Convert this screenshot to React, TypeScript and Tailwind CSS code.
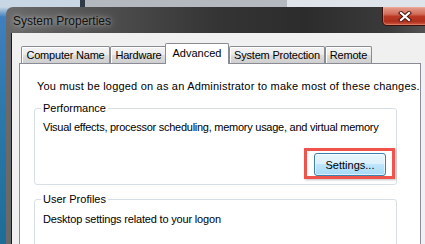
export default function App() {
  const tab =
    "h-[17px] flex items-center justify-center border border-b-0 border-[#898c95] shadow-[inset_1px_1px_0_#ffffff] bg-[linear-gradient(to_bottom,#f3f3f3,#ebebeb_50%,#dddddd_50%,#cfcfcf)] text-[11px] leading-[14px] text-black rounded-t-[2px] whitespace-nowrap tracking-[-0.2px]";
  return (
    <div className="w-[425px] h-[244px] overflow-hidden flex flex-col bg-[#1f6f9e] font-['Liberation_Sans',Arial,sans-serif]">
      <div className="h-[7px] flex shrink-0">
        <div className="w-[80px] bg-[#c9d6e3]" />
        <div className="w-[5px] bg-[#2f3a46]" />
        <div className="w-[202px] bg-[#b4b9bf]" />
        <div className="flex-1 bg-[#dfe4ea]" />
      </div>
      <div className="flex flex-1 min-h-0 bg-[linear-gradient(to_bottom,#c9d6e3_0px,#3f7fbf_10px,#2a77a8_50%,#1d6d98)]">
        <div className="w-[6px] shrink-0" />
        <div className="flex-1 flex flex-col rounded-tl-[7px] bg-[linear-gradient(to_right,#6a6a6a,#525252_20%,#343434_50%,#2c2c2c_70%,#3a3a3a_90%,#555555)]">
          <div className="h-[26px] shrink-0 flex justify-between items-start">
            <div className="mt-[6px] ml-[7px] text-[12px] leading-[16px] text-[#111] [text-shadow:0_0_10px_rgba(255,255,255,0.6),0_0_4px_rgba(255,255,255,0.45)]">
              System Properties
            </div>
            <div className="mr-[2px] w-[47px] h-[19px] flex items-center justify-center rounded-b-[5px] border border-t-0 border-[#3b0f08] bg-[linear-gradient(to_bottom,#e4a091_0%,#d26c58_40%,#bb3a25_52%,#b0301d_80%,#cf5b42_100%)] shadow-[inset_0_0_0_1px_rgba(255,190,170,0.35)]">
              <svg width="14" height="11" viewBox="0 0 14 11">
                <path d="M3 2 L11 9 M11 2 L3 9" stroke="#4a1a12" strokeWidth="4.2" strokeLinecap="square" />
                <path d="M3 2 L11 9 M11 2 L3 9" stroke="#ffffff" strokeWidth="2.2" strokeLinecap="square" />
              </svg>
            </div>
          </div>
          <div className="flex-1 min-h-0 ml-[5px] mr-[5px] border-l border-[#1a1a1a] bg-[#f0f0f0] pt-[10px] pl-[7px] pr-[5px] flex flex-col">
            <div className="relative z-10 h-[20px] flex items-end pl-[2px] shrink-0">
              <div className={`${tab} w-[89px]`}>Computer Name</div>
              <div className={`${tab} w-[57px]`}>Hardware</div>
              <div className="-ml-[2px] -mb-px w-[64px] h-[21px] flex items-center justify-center pb-[2px] bg-white border border-b-0 border-[#898c95] rounded-t-[2px] text-[11px] leading-[14px] text-black">
                Advanced
              </div>
              <div className={`${tab} w-[96px]`}>System Protection</div>
              <div className={`${tab} w-[47px]`}>Remote</div>
            </div>
            <div className="h-[300px] shrink-0 border border-[#898c95] bg-white pl-[14px] pt-[14px] text-[11px] text-black whitespace-nowrap">
              <div className="pl-[3px] leading-[16px] tracking-[0.2px]">
                You must be logged on as an Administrator to make most of these changes.
              </div>
              <div className="relative mt-[14px] w-[363px] border border-[#d5dfe5] rounded-[3px] pl-[8px] pt-[10px] pb-[8px]">
                <div className="absolute left-[6px] -top-[9px] px-[2px] bg-white leading-[16px]">Performance</div>
                <div className="leading-[16px] tracking-[-0.26px]">
                  Visual effects, processor scheduling, memory usage, and virtual memory
                </div>
                <div className="mt-[18px] flex justify-end pr-[10px]">
                  <div className="relative">
                    <div className="w-[72px] h-[23px] flex items-center justify-center rounded-[3px] border border-[#3c7fb1] shadow-[inset_0_0_0_1px_rgba(255,255,255,0.6)] bg-[linear-gradient(to_bottom,#eaf6fd,#d9f0fc_50%,#bee6fd_50%,#a7d9f5)] leading-[14px]">
                      Settings...
                    </div>
                    <div className="absolute -left-[10px] -right-[9px] -top-[5px] -bottom-[3px] border-[3px] border-[#f0524c] shadow-[1px_1px_2px_rgba(0,0,0,0.25)]" />
                  </div>
                </div>
              </div>
              <div className="relative mt-[14px] w-[363px] h-[80px] border border-[#d5dfe5] rounded-[3px] pl-[8px] pt-[11px]">
                <div className="absolute left-[6px] -top-[9px] px-[2px] bg-white leading-[16px]">User Profiles</div>
                <div className="leading-[16px] tracking-[-0.18px]">Desktop settings related to your logon</div>
              </div>
            </div>
          </div>
        </div>
      </div>
    </div>
  );
}
